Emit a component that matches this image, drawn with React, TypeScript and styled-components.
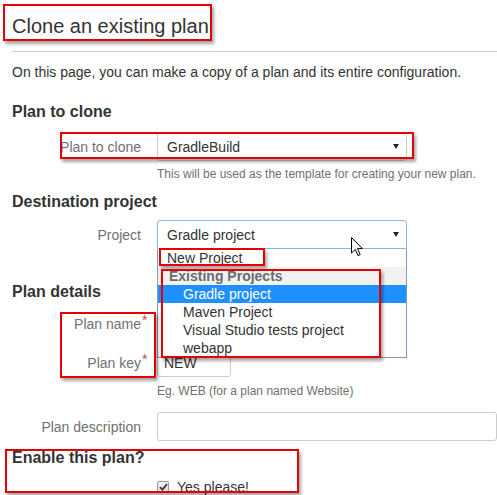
import React from "react";
import styled, { createGlobalStyle } from "styled-components";

const Global = createGlobalStyle`
  html, body { margin: 0; padding: 0; background: #fff; overflow: hidden; }
  body { font-family: Arial, "Liberation Sans", sans-serif; color: #333; }
`;

const Page = styled.div`
  position: relative;
  display: flow-root;
  width: 497px;
  height: 495px;
  padding-left: 12px;
  box-sizing: border-box;
  overflow: hidden;
`;

const Title = styled.h1`
  margin: 14px 0 0;
  font-size: 20px;
  line-height: 24px;
  font-weight: normal;
  color: #333;
`;

const Rule = styled.hr`
  margin: 13px 0 0;
  height: 0;
  border: 0;
  border-top: 1px solid #cccccc;
`;

const Intro = styled.p`
  margin: 10px 0 0;
  font-size: 14px;
  line-height: 20px;
  color: #333;
`;

const SectionHeading = styled.h2<{ $gap: number }>`
  margin: ${(p) => p.$gap}px 0 0;
  font-size: 16px;
  line-height: 20px;
  font-weight: bold;
  color: #333;
`;

const FieldRow = styled.div<{ $gap: number }>`
  display: grid;
  grid-template-columns: 129px auto;
  column-gap: 16px;
  align-items: center;
  justify-items: start;
  margin-top: ${(p) => p.$gap}px;
`;

const Label = styled.label`
  position: relative;
  justify-self: end;
  font-size: 14px;
  line-height: 20px;
  color: #707070;
`;

const Required = styled.span`
  position: absolute;
  left: 100%;
  top: -4px;
  margin-left: 1px;
  color: #d04437;
  font-size: 14px;
  line-height: 20px;
`;

const Help = styled.div<{ $gap: number }>`
  margin: ${(p) => p.$gap}px 0 0 145px;
  font-size: 12px;
  line-height: 16px;
  color: #707070;
`;

const SelectBox = styled.div<{ $open?: boolean }>`
  position: relative;
  width: 250px;
  height: 29px;
  box-sizing: border-box;
  display: flex;
  align-items: center;
  justify-content: space-between;
  padding: 0 7px 0 9px;
  border: 1px solid ${(p) => (p.$open ? "#8db3e6" : "#cccccc")};
  border-radius: ${(p) => (p.$open ? "3px 3px 0 0" : "3px")};
  background: #fff;
  font-size: 14px;
  line-height: 20px;
  color: #333;
`;

const Arrow = styled.svg`
  display: block;
  width: 6px;
  height: 5px;
`;

const Menu = styled.ul`
  position: absolute;
  top: calc(100% + 1px);
  left: -1px;
  width: 250px;
  box-sizing: border-box;
  margin: 0;
  padding: 0;
  list-style: none;
  background: #fff;
  border: 1px solid #7f9db9;
  border-top: 0;
  z-index: 3;
`;

type OptionKind = "plain" | "group" | "child" | "selected";

const Option = styled.li<{ $kind: OptionKind }>`
  height: 18px;
  line-height: 18px;
  font-size: 14px;
  white-space: nowrap;
  padding-left: ${(p) =>
    p.$kind === "plain" ? 9 : p.$kind === "group" ? 11 : 25}px;
  font-weight: ${(p) => (p.$kind === "group" ? "bold" : "normal")};
  color: ${(p) =>
    p.$kind === "group" ? "#6b6b6b" : p.$kind === "selected" ? "#fff" : "#333"};
  background: ${(p) =>
    p.$kind === "group" ? "#f2f2f2" : p.$kind === "selected" ? "#1e90ff" : "#fff"};
`;

const TextInput = styled.div<{ $width: number }>`
  width: ${(p) => p.$width}px;
  height: 29px;
  box-sizing: border-box;
  display: flex;
  align-items: center;
  padding-left: 6px;
  border: 1px solid #cccccc;
  border-radius: 3px;
  background: #fff;
  font-size: 14px;
  line-height: 20px;
  color: #333;
`;

const CheckLine = styled.div`
  display: flex;
  align-items: center;
  gap: 8px;
  font-size: 14px;
  line-height: 20px;
  color: #333;
`;

const CheckBox = styled.span`
  display: flex;
  align-items: center;
  justify-content: center;
  width: 12px;
  height: 12px;
  box-sizing: border-box;
  border: 1px solid #9a9a9a;
  border-radius: 2px;
  background: linear-gradient(#f4f4f4, #d8d8d8);
`;

const Cursor = styled.svg`
  position: absolute;
  left: 351px;
  top: 237px;
  width: 12px;
  height: 20px;
  z-index: 6;
`;

const Callout = styled.div<{ $x: number; $y: number; $w: number; $h: number }>`
  position: absolute;
  left: ${(p) => p.$x}px;
  top: ${(p) => p.$y}px;
  width: ${(p) => p.$w}px;
  height: ${(p) => p.$h}px;
  box-sizing: border-box;
  border: 2px solid #e60000;
  box-shadow: 2px 3px 3px rgba(0, 0, 0, 0.35);
  pointer-events: none;
  z-index: 5;
`;

const DownArrow = () => (
  <Arrow viewBox="0 0 6 5">
    <path d="M0 0 L6 0 L3 5 Z" fill="#222" />
  </Arrow>
);

export default function App() {
  return (
    <>
      <Global />
      <Page>
        <Title>Clone an existing plan</Title>
        <Rule />
        <Intro>
          On this page, you can make a copy of a plan and its entire configuration.
        </Intro>

        <SectionHeading $gap={20}>Plan to clone</SectionHeading>
        <FieldRow $gap={10}>
          <Label>Plan to clone</Label>
          <SelectBox>
            <span>GradleBuild</span>
            <DownArrow />
          </SelectBox>
        </FieldRow>
        <Help $gap={5}>This will be used as the template for creating your new plan.</Help>

        <SectionHeading $gap={10}>Destination project</SectionHeading>
        <FieldRow $gap={8}>
          <Label>Project</Label>
          <SelectBox $open>
            <span>Gradle project</span>
            <DownArrow />
            <Menu>
              <Option $kind="plain">New Project</Option>
              <Option $kind="group">Existing Projects</Option>
              <Option $kind="selected">Gradle project</Option>
              <Option $kind="child">Maven Project</Option>
              <Option $kind="child">Visual Studio tests project</Option>
              <Option $kind="child">webapp</Option>
            </Menu>
          </SelectBox>
        </FieldRow>

        <SectionHeading $gap={33}>Plan details</SectionHeading>
        <FieldRow $gap={7}>
          <Label>
            Plan name<Required>*</Required>
          </Label>
          <TextInput $width={250} />
        </FieldRow>
        <FieldRow $gap={10}>
          <Label>
            Plan key<Required>*</Required>
          </Label>
          <TextInput $width={74}>NEW</TextInput>
        </FieldRow>
        <Help $gap={6}>Eg. WEB (for a plan named Website)</Help>
        <FieldRow $gap={13}>
          <Label>Plan description</Label>
          <TextInput $width={340} />
        </FieldRow>

        <SectionHeading $gap={7}>Enable this plan?</SectionHeading>
        <FieldRow $gap={9}>
          <span />
          <CheckLine>
            <CheckBox>
              <svg width="9" height="8" viewBox="0 0 9 8">
                <path d="M1 4.2 L3.4 6.6 L8 1.2" fill="none" stroke="#3c3c3c" strokeWidth="1.8" />
              </svg>
            </CheckBox>
            Yes please!
          </CheckLine>
        </FieldRow>

        <Cursor viewBox="0 0 12 20">
          <path
            d="M0.5 0.5 L0.5 16 L4.3 12.4 L7 18.6 L9.2 17.6 L6.6 11.6 L11.4 11.6 Z"
            fill="#fff"
            stroke="#000"
            strokeWidth="1"
            strokeLinejoin="miter"
          />
        </Cursor>

        <Callout $x={3} $y={4} $w={209} $h={37} />
        <Callout $x={60} $y={132} $w={354} $h={27} />
        <Callout $x={159} $y={248} $w={106} $h={18} />
        <Callout $x={161} $y={269} $w={220} $h={89} />
        <Callout $x={60} $y={312} $w={96} $h={66} />
        <Callout $x={5} $y={449} $w={294} $h={44} />
      </Page>
    </>
  );
}
